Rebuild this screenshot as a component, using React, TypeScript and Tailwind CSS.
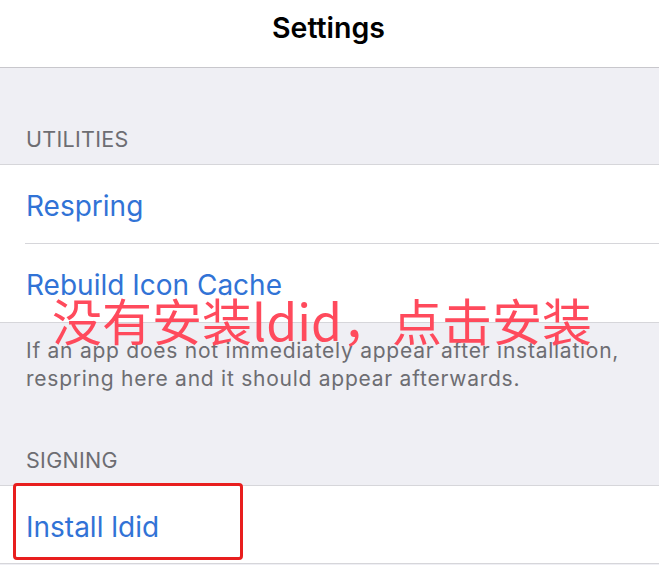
import React from "react";

const font = { fontFamily: "Inter, 'Noto Sans', sans-serif" };

export default function App() {
  return (
    <div className="relative w-[659px] h-[565px] overflow-hidden bg-[#efeff4]" style={font}>
      <div className="h-[68px] bg-white border-b border-[#c8c7cc] flex items-center justify-center">
        <span className="text-[28.5px] font-semibold text-black mb-[10px] ml-[-2px]">Settings</span>
      </div>
      <div className="h-[96px] flex items-end px-[26px] pb-[13px]">
        <span className="text-[21.5px] leading-[24px] text-[#6d6d72] tracking-[0.3px]">UTILITIES</span>
      </div>
      <div className="bg-white border-y border-[#d6d6da]">
        <div className="h-[78px] flex items-center px-[26px]">
          <span className="text-[28px] text-[#3173d6] mt-[4px]">Respring</span>
        </div>
        <div className="ml-[25px] h-px bg-[#d6d6da]" />
        <div className="h-[78px] flex items-center px-[26px]">
          <span className="text-[28px] text-[#3173d6] mt-[4px]">Rebuild Icon Cache</span>
        </div>
      </div>
      <div className="px-[26px] pt-[14px] text-[21px] leading-[28px] text-[#6d6d72] tracking-[0.75px]">
        If an app does not immediately appear after installation,
        <br />
        respring here and it should appear afterwards.
      </div>
      <div className="h-[92px] flex items-end px-[26px] pb-[13px]">
        <span className="text-[21.5px] leading-[24px] text-[#6d6d72] tracking-[0.3px]">SIGNING</span>
      </div>
      <div className="bg-white border-y border-[#d6d6da]">
        <div className="h-[77px] flex items-center px-[26px]">
          <span className="text-[28px] text-[#3173d6] mt-[4px]">Install ldid</span>
        </div>
      </div>
      <div
        className="absolute left-[52px] top-[294px] text-[50px] leading-none text-[#ff4a5c] whitespace-nowrap"
        style={{ fontFamily: "'Noto Sans CJK SC', sans-serif" }}
      >
        没有安装ldid，点击安装
      </div>
      <div className="absolute left-[13px] top-[483px] w-[230px] h-[77px] border-[3px] border-[#e81e1e] rounded-[4px]" />
    </div>
  );
}
